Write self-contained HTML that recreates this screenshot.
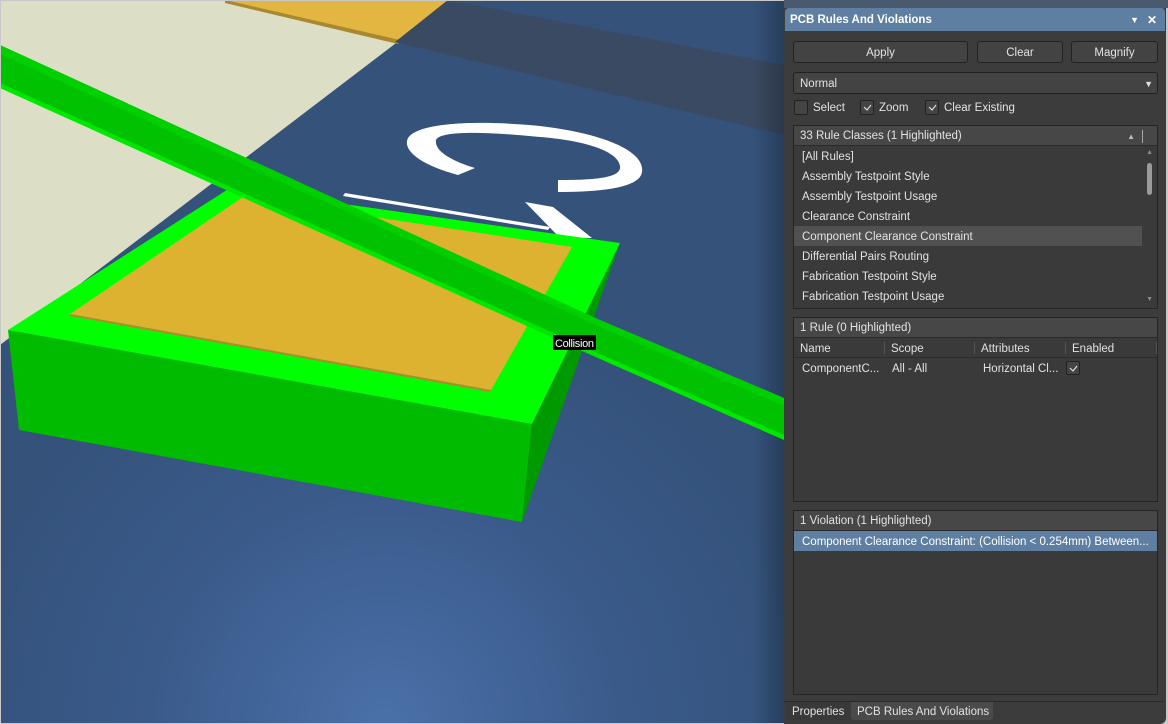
<!DOCTYPE html>
<html><head><meta charset="utf-8"><style>
*{margin:0;padding:0;box-sizing:border-box}
body{width:1168px;height:724px;overflow:hidden;background:#c8c8c8;font-family:"Liberation Sans",sans-serif;font-size:11.5px;color:#e2e2e2;position:relative}
.a{position:absolute;white-space:nowrap}
.btn{position:absolute;top:41px;height:22px;background:#434343;border:1px solid #222;border-radius:3px;text-align:center;line-height:22px}
.box{position:absolute;left:793px;width:365px;border:1px solid #242424;background:#3a3a3a}
.hdr{height:20px;background:#474747;border-bottom:1px solid #2a2a2a;line-height:21px;padding-left:6px;position:relative}
.row{height:20px;line-height:22px;padding-left:8px;white-space:nowrap;overflow:hidden}
.cb{position:absolute;top:100px;width:14px;height:15px;border:1px solid #222;background:#444;border-radius:2px}
.cb svg{position:absolute;left:2px;top:2px}
</style></head><body>
<svg class="a" style="left:1px;top:1px" width="783" height="722" viewBox="1 1 783 722">
<defs>
<radialGradient id="bg" cx="385" cy="724" r="430" gradientUnits="userSpaceOnUse">
<stop offset="0" stop-color="#4a71a9"/><stop offset="0.55" stop-color="#3a5a8a"/><stop offset="1" stop-color="#34527a"/></radialGradient>
<linearGradient id="rt" x1="0" x2="1"><stop offset="0.96" stop-color="#000" stop-opacity="0"/><stop offset="1" stop-color="#000" stop-opacity="0.25"/></linearGradient>
</defs>
<rect x="0" y="0" width="784" height="724" fill="url(#bg)"/>
<polygon points="0,0 225,0 400,40 0,345" fill="#dcdfc6"/>
<polygon points="225,0 448,0 398,40" fill="#e2b640"/>
<polygon points="225,0 400,40 398,44 225,3" fill="#a88830"/>
<polygon points="448,0 784,65 784,135 395,42" fill="#3a4a62"/>
<rect x="0" y="0" width="784" height="724" fill="url(#rt)"/>
<path d="M458,175 C420,165 402,150 408,138 C418,122 480,120 540,126 C600,133 645,150 642,172 C640,188 600,192 558,192 L558,180 C595,180 622,178 620,166 C618,150 580,140 540,137 C490,132 440,130 436,140 C434,152 455,162 475,168 Z" fill="#fff"/>
<polygon points="525,202 553,207 592,238 560,238" fill="#fff"/>
<polygon points="345,193 550,227 548,230 343,196" fill="#fff"/>
<polygon points="8,330 19,430 522,522 532,424" fill="#00bb00"/>
<polygon points="532,424 522,522 620,243" fill="#009a00"/>
<polygon points="8,330 230,188 620,243 532,424" fill="#00ff00"/>
<polygon points="70,314 243,197 572,247 491,390" fill="#dcb230"/>
<polygon points="70,314 491,390 490,392 70,316" fill="#b08a30"/>
<polygon points="0,45 600,320 784,398 784,438 600,357 0,86" fill="#00c200"/>
<polygon points="0,45 600,320 784,398 784,406 600,327 0,54" fill="#00d000"/>
<polygon points="0,83 600,354 784,435 784,440 600,359 0,88" fill="#00e800"/>
<rect x="553" y="335" width="43" height="15" fill="#000"/>
<text x="555" y="347" font-size="11" fill="#fff" font-family="Liberation Sans" textLength="39">Collision</text>
</svg>
<div class="a" style="left:784px;top:0;width:382px;height:724px;background:#3c3c3c;border-radius:0 0 6px 0"></div>
<div class="a" style="left:784px;top:0;width:384px;height:8px;background:#4a5a6e"></div>
<div class="a" style="left:785px;top:8px;width:380px;height:23px;background:#5e7fa1;border-radius:4px 4px 0 0;font-weight:bold;line-height:24px;padding-left:5px;color:#fff;font-size:11.5px">PCB Rules And Violations
<span class="a" style="right:26px;top:0;font-size:9px">▼</span><span class="a" style="right:8px;top:0;font-size:12px">✕</span></div>
<div class="btn" style="left:793px;width:175px">Apply</div>
<div class="btn" style="left:977px;width:86px">Clear</div>
<div class="btn" style="left:1071px;width:87px">Magnify</div>
<div class="btn" style="left:793px;top:72px;width:365px;text-align:left;padding-left:6px">Normal<span class="a" style="right:4px;top:0;font-size:9px">▼</span></div>
<div class="cb" style="left:794px"></div><div class="a" style="left:813px;top:102px">Select</div>
<div class="cb" style="left:860px"><svg width="9" height="9"><path d="M1,4 L4,7 L8,2" stroke="#ddd" fill="none" stroke-width="1.2"/></svg></div><div class="a" style="left:879px;top:102px">Zoom</div>
<div class="cb" style="left:925px"><svg width="9" height="9"><path d="M1,4 L4,7 L8,2" stroke="#ddd" fill="none" stroke-width="1.2"/></svg></div><div class="a" style="left:944px;top:102px">Clear Existing</div>

<div class="box" style="top:125px;height:184px">
<div class="hdr">33 Rule Classes (1 Highlighted)<span class="a" style="right:22px;top:0;font-size:8px;color:#bbb">▲</span><span class="a" style="right:14px;top:4px;width:1px;height:13px;background:#aaa"></span></div>
<div class="row">[All Rules]</div>
<div class="row">Assembly Testpoint Style</div>
<div class="row">Assembly Testpoint Usage</div>
<div class="row">Clearance Constraint</div>
<div class="row" style="background:#515151;margin-right:15px">Component Clearance Constraint</div>
<div class="row">Differential Pairs Routing</div>
<div class="row">Fabrication Testpoint Style</div>
<div class="row">Fabrication Testpoint Usage</div>
<div class="a" style="right:5px;top:37px;width:5px;height:32px;background:#9a9a9a;border-radius:3px"></div>
<div class="a" style="right:4px;top:23px;font-size:7px;color:#888">▲</div>
<div class="a" style="right:4px;top:170px;font-size:7px;color:#888">▼</div>
</div>

<div class="box" style="top:317px;height:185px">
<div class="hdr">1 Rule (0 Highlighted)</div>
<div style="height:20px;line-height:22px;border-bottom:1px solid #2c2c2c;position:relative">
<span class="a" style="left:6px">Name</span><span class="a" style="left:90px;top:4px;width:1px;height:12px;background:#555"></span>
<span class="a" style="left:97px">Scope</span><span class="a" style="left:180px;top:4px;width:1px;height:12px;background:#555"></span>
<span class="a" style="left:187px">Attributes</span><span class="a" style="left:271px;top:4px;width:1px;height:12px;background:#555"></span>
<span class="a" style="left:278px">Enabled</span><span class="a" style="left:362px;top:4px;width:1px;height:12px;background:#555"></span></div>
<div style="height:21px;line-height:23px;position:relative">
<span class="a" style="left:8px">ComponentC...</span><span class="a" style="left:98px">All - All</span><span class="a" style="left:189px">Horizontal Cl...</span>
<span class="a" style="left:272px;top:3px;width:14px;height:14px;border:1px solid #222;background:#444;border-radius:2px"><svg class="a" style="left:2px;top:2px" width="9" height="9"><path d="M1,4 L4,7 L8,2" stroke="#ddd" fill="none" stroke-width="1.2"/></svg></span></div>
</div>

<div class="box" style="top:510px;height:185px">
<div class="hdr">1 Violation (1 Highlighted)</div>
<div class="row" style="background:#5e7fa1;color:#fff">Component Clearance Constraint: (Collision &lt; 0.254mm) Between...</div>
</div>

<div class="a" style="left:784px;top:701px;width:380px;height:1px;background:#2a2a2a"></div>
<div class="a" style="left:786px;top:702px;width:64px;height:18px;line-height:20px;padding-left:6px;background:#393939">Properties</div>
<div class="a" style="left:851px;top:702px;width:142px;height:18px;line-height:20px;padding-left:6px;background:#4a4a4a;border-radius:0 0 3px 3px">PCB Rules And Violations</div>
</body></html>
